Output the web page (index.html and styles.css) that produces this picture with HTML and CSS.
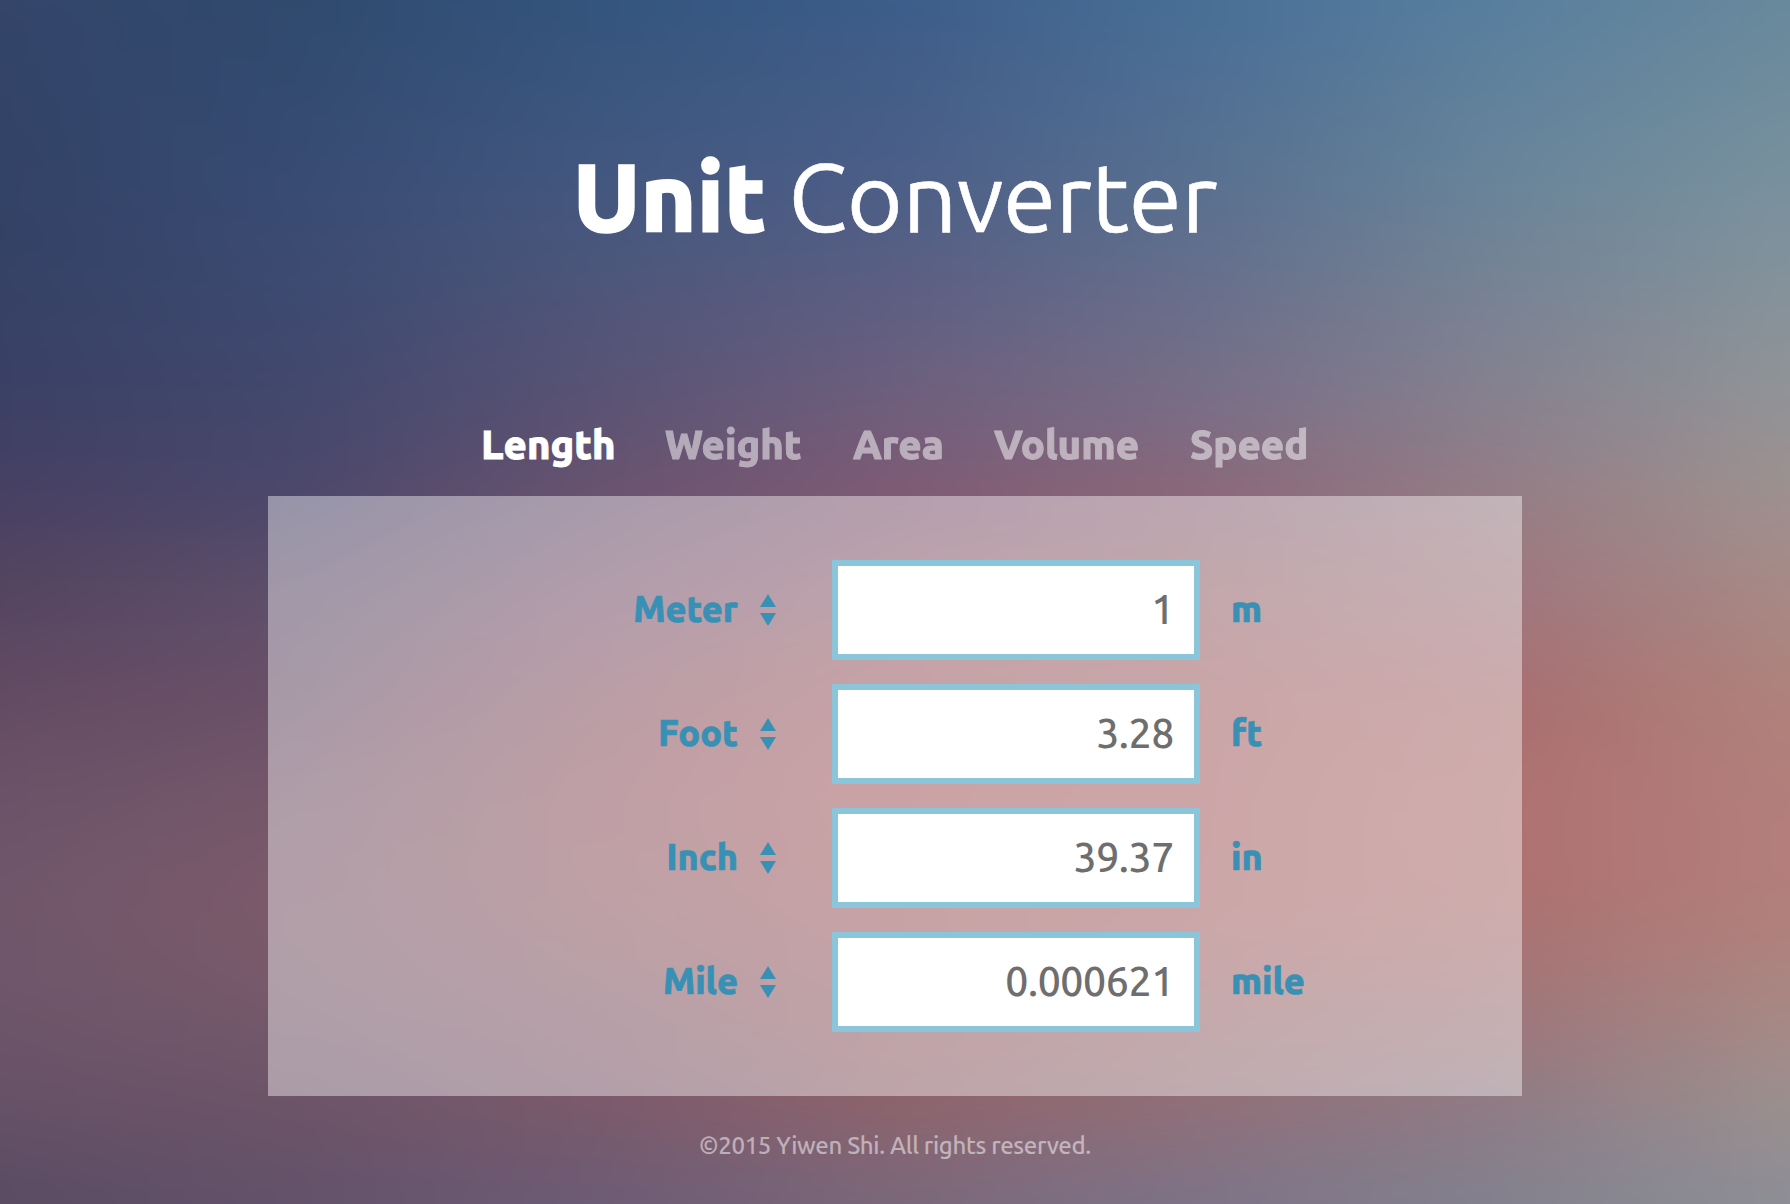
FILE: index.html
```html
<!DOCTYPE html>
<html lang="en">
<head>
<meta charset="utf-8">
<title>Unit Converter</title>
<link rel="stylesheet" href="styles.css">
</head>
<body>
<div class="backdrop" aria-hidden="true">
  <div class="mesh">
    <div class="band band-0"></div>
    <div class="band band-1"></div>
    <div class="band band-2"></div>
    <div class="band band-3"></div>
    <div class="band band-4"></div>
    <div class="band band-5"></div>
    <div class="band band-6"></div>
    <div class="band band-7"></div>
    <div class="band band-8"></div>
    <div class="band band-9"></div>
    <div class="band band-10"></div>
  </div>
</div>
<main class="page">
  <h1 class="title"><span class="title-strong">Unit</span><span class="title-light">Converter</span></h1>
  <nav class="tabs">
    <a class="tab active">Length</a>
    <a class="tab">Weight</a>
    <a class="tab">Area</a>
    <a class="tab">Volume</a>
    <a class="tab">Speed</a>
  </nav>
  <section class="panel">
    <div class="row">
      <label class="label" for="v1">Meter</label>
      <svg class="arrows" viewBox="0 0 16 32"><path d="M8 0L16 13H0zM0 19H16L8 32z"/></svg>
      <input class="value" id="v1" value="1">
      <span class="unit">m</span>
    </div>
    <div class="row">
      <label class="label" for="v2">Foot</label>
      <svg class="arrows" viewBox="0 0 16 32"><path d="M8 0L16 13H0zM0 19H16L8 32z"/></svg>
      <input class="value" id="v2" value="3.28">
      <span class="unit">ft</span>
    </div>
    <div class="row">
      <label class="label" for="v3">Inch</label>
      <svg class="arrows" viewBox="0 0 16 32"><path d="M8 0L16 13H0zM0 19H16L8 32z"/></svg>
      <input class="value" id="v3" value="39.37">
      <span class="unit">in</span>
    </div>
    <div class="row">
      <label class="label" for="v4">Mile</label>
      <svg class="arrows" viewBox="0 0 16 32"><path d="M8 0L16 13H0zM0 19H16L8 32z"/></svg>
      <input class="value" id="v4" value="0.000621">
      <span class="unit">mile</span>
    </div>
  </section>
  <footer class="footer">©2015 Yiwen Shi. All rights reserved.</footer>
</main>
</body>
</html>
```
FILE: styles.css
```css
* { box-sizing: border-box; }

body {
  margin: 0;
  height: 1204px;
  overflow: hidden;
  background: #5a4d63;
  font-family: Ubuntu, "Noto Sans", sans-serif;
}

/* Colour mesh: horizontal gradients that fade into one another downwards.
   It bleeds 100px past every edge so the softening never shows a border. */
.backdrop { position: absolute; inset: 0; z-index: -1; overflow: hidden; }
.mesh { position: absolute; inset: -100px; filter: blur(30px); }
.band {
  position: absolute;
  inset: 0;
  background: linear-gradient(90deg, var(--a) 100px, var(--b) 400px, var(--c) 700px, var(--d) 1000px, var(--e) 1300px, var(--f) 1600px, var(--g) 1890px);
  -webkit-mask-image: linear-gradient(transparent calc(var(--from) + 100px), #000 calc(var(--to) + 100px));
  mask-image: linear-gradient(transparent calc(var(--from) + 100px), #000 calc(var(--to) + 100px));
}
.band-0 { --from: -102px; --to: -101px; --a: #34456a; --b: #304a6e; --c: #33557e; --d: #3c5d8a; --e: #486f97; --f: #587f9f; --g: #68899c; }
.band-1 { --from: 0px; --to: 200px; --a: #334266; --b: #394c74; --c: #45587f; --d: #4e5f87; --e: #5a708f; --f: #6b8599; --g: #7b929e; }
.band-2 { --from: 200px; --to: 400px; --a: #3b4065; --b: #43486d; --c: #5a5374; --d: #6f5f7d; --e: #796e87; --f: #87818f; --g: #929497; }
.band-3 { --from: 400px; --to: 500px; --a: #484163; --b: #4d486b; --c: #6a536f; --d: #805a74; --e: #8c6779; --f: #967d85; --g: #9f918f; }
.band-4 { --from: 500px; --to: 600px; --a: #564560; --b: #60506b; --c: #7d576f; --d: #91616f; --e: #99696f; --f: #a0767d; --g: #a88985; }
.band-5 { --from: 600px; --to: 700px; --a: #634c63; --b: #6b5068; --c: #8b5866; --d: #a06064; --e: #a46568; --f: #a96e70; --g: #b0827c; }
.band-6 { --from: 700px; --to: 800px; --a: #6c5369; --b: #76586a; --c: #925b64; --d: #a66064; --e: #a96768; --f: #ae7271; --g: #b37f7c; }
.band-7 { --from: 800px; --to: 900px; --a: #71576b; --b: #7c5a6a; --c: #905d66; --d: #a16164; --e: #a86769; --f: #ad7171; --g: #b37f7c; }
.band-8 { --from: 900px; --to: 1000px; --a: #6e566a; --b: #775a6b; --c: #865c69; --d: #966066; --e: #9e6b6e; --f: #a17578; --g: #a98883; }
.band-9 { --from: 1000px; --to: 1100px; --a: #675268; --b: #6d5468; --c: #7c5a6b; --d: #8f646c; --e: #917078; --f: #907b85; --g: #9c908f; }
.band-10 { --from: 1100px; --to: 1204px; --a: #594b62; --b: #62526b; --c: #6b5c76; --d: #79687c; --e: #7c7389; --f: #81828f; --g: #8c8e96; }

.page { display: flex; flex-direction: column; align-items: center; padding-top: 137px; }

.title { display: flex; gap: 22px; margin: 0; font-size: 96px; line-height: 120px; color: #fff; }
.title-strong { font-weight: 800; letter-spacing: -0.3px; -webkit-text-stroke: 1.5px #fff; }
.title-light { font-weight: 370; letter-spacing: -0.4px; -webkit-text-stroke: 0.6px #fff; }

.tabs {
  display: grid;
  grid-template-columns: 184px 188px 141px 196px 120px;
  margin: 163px 0 26px;
  padding-left: 1px;
  font-size: 40px;
  font-weight: 800;
  line-height: 50px;
}
.tab { color: #fff; opacity: 0.5; -webkit-text-stroke: 0.9px #fff; }
.tab.active { opacity: 1; }

.panel {
  display: flex;
  flex-direction: column;
  gap: 24px;
  width: 1254px;
  height: 600px;
  padding: 64px 0;
  background: rgba(255, 255, 255, 0.42);
}
.row {
  display: grid;
  grid-template-columns: 470px 22px 16px 56px 368px 31px 1fr;
  align-items: center;
  height: 100px;
}
.label, .unit {
  padding-bottom: 3px;
  color: #3891b5;
  font-size: 36px;
  font-weight: 800;
  line-height: 46px;
  -webkit-text-stroke: 0.7px #3891b5;
}
.label { grid-column: 1; text-align: right; }
.arrows { grid-column: 3; width: 16px; height: 32px; fill: #3891b5; }
.value {
  grid-column: 5;
  width: 368px;
  height: 100px;
  padding: 0 20px 2px 0;
  border: 6px solid #8bc5d9;
  border-radius: 0;
  background: #fff;
  color: #6e6e6e;
  font: 500 41px Ubuntu, "Noto Sans", sans-serif;
  letter-spacing: -0.4px;
  text-align: right;
  outline: none;
}
.unit { grid-column: 7; }

.footer {
  margin-top: 35px;
  color: rgba(255, 255, 255, 0.5);
  font-size: 24px;
  font-weight: 470;
  line-height: 30px;
  letter-spacing: -0.34px;
}
```
